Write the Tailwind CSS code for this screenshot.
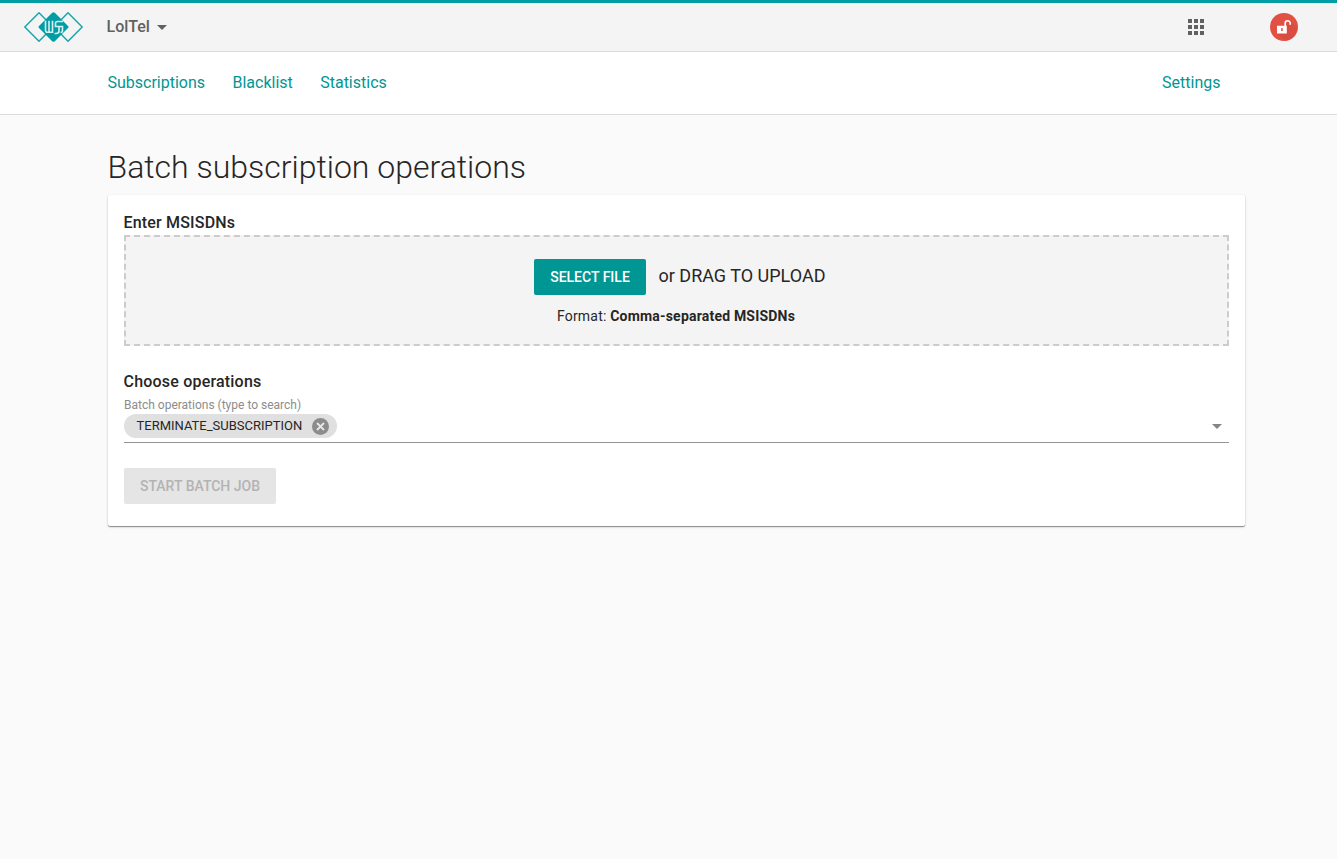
<!DOCTYPE html>
<html lang="en">
<head>
<meta charset="utf-8">
<title>Batch subscription operations</title>
<script src="https://cdn.jsdelivr.net/npm/@tailwindcss/browser@4"></script>
</head>
<body class="min-h-screen bg-[#fafafa] font-['Roboto',sans-serif] text-[#262626] antialiased">
<header class="flex h-[52px] items-center border-t-[3px] border-b border-t-[#009da5] border-b-[#dcdcdc] bg-[#f4f4f4] pl-6 pr-[39px]">
  <svg class="h-[30px] w-[59px]" viewBox="0 0 59 30" fill="none">
    <g stroke="#1aa6ad" stroke-width="1.500" stroke-linejoin="round">
      <path d="M15 .8 29 15 15 29.2.8 15Z"/>
      <path d="M44 .8 58.200 15 44 29.200 30 15Z"/>
    </g>
    <path d="M28.200.8Q29.500-.4 30.800.8L44 13.900Q45 15 44 16.100L30.800 29.200Q29.500 30.400 28.200 29.200L15 16.100Q14 15 15 13.900Z" fill="#009da5"/>
    <path d="M21.500 8.700V18Q21.500 20.300 23.500 20.300H28.500V8.700M25 8.700V20.300M39 9.500H33.500Q31.500 9.500 31.500 11.500V14.500H38.500V18.500Q38.500 20.500 36.500 20.500M35 14.500V19Q35 21.500 32 21.500H30.500" stroke="#d9f0f1" stroke-width="1.600"/>
  </svg>
  <button class="ml-[23.500px] flex items-center text-base font-medium leading-6 text-[#616161]">
    <span>LolTel</span>
    <svg class="ml-[7px] h-[5px] w-[10px]" viewBox="0 0 10 5" fill="#616161"><path d="M0 0h10L5 5Z"/></svg>
  </button>
  <svg class="ml-auto h-4 w-4" viewBox="0 0 16 16" fill="#616161"><path d="M0 0h4v4H0zM6 0h4v4H6zM12 0h4v4h-4zM0 6h4v4H0zM6 6h4v4H6zM12 6h4v4h-4zM0 12h4v4H0zM6 12h4v4H6zM12 12h4v4h-4z"/></svg>
  <svg class="ml-[66px] h-7 w-7" viewBox="0 0 28 28">
    <circle cx="14" cy="14" r="14" fill="#e15042"/>
    <path d="M20.500 9 27.200 14.500A14 14 0 0 1 16 27.800L7 20.500 17 13Z" fill="#d94c3f"/>
    <path d="M15.200 13V10.300a2.500 2.500 0 0 1 5 0V11.800" fill="none" stroke="#fff" stroke-width="1.600"/>
    <path fill="#fff" fill-rule="evenodd" d="M7 12.700h9.800v7.800H7zM11.200 15v3h1.500v-3z"/>
  </svg>
</header>
<nav class="flex h-[63px] items-center gap-[27.400px] border-b border-[#dcdcdc] bg-white pl-[107.500px] pr-[116.500px] text-base text-[#009694]">
  <a>Subscriptions</a>
  <a>Blacklist</a>
  <a>Statistics</a>
  <a class="ml-auto">Settings</a>
</nav>
<main class="ml-[108px] w-[1137px] pt-8">
  <h1 class="-ml-[0.5px] h-12 text-[32px] font-light leading-[40px]">Batch subscription operations</h1>
  <section class="h-[331px] rounded-[2px] bg-white px-4 pt-4 shadow-[0_1px_1px_rgba(0,0,0,0.4),0_1px_3px_rgba(0,0,0,0.12)]">
    <h2 class="-ml-[0.5px] h-6 text-base font-medium leading-6 tracking-[0.18px]">Enter MSISDNs</h2>
    <div class="h-[111px] border-2 border-dashed border-[#cccccc] bg-[#f4f4f4] pt-[22px]">
      <div class="flex items-center justify-center gap-[12.500px] pl-[6.500px]">
        <button class="h-9 w-28 rounded-[2px] bg-[#009694] text-sm font-medium text-white">SELECT FILE</button>
        <span class="-mt-0.5 text-lg leading-6">or DRAG TO UPLOAD</span>
      </div>
      <p class="mt-[11px] -ml-px text-center text-sm leading-5 tracking-[0.2px]">Format: <b>Comma-separated MSISDNs</b></p>
    </div>
    <h2 class="-ml-[0.5px] mt-6 h-6 text-base font-medium leading-6 tracking-[0.2px]">Choose operations</h2>
    <label class="block h-5 pt-[3px] text-xs leading-4 text-[#8c8c8c]">Batch operations (type to search)</label>
    <div class="flex h-[29px] items-start justify-between border-b border-[#949494] pr-[7.500px]">
      <span class="flex h-6 w-[213px] items-center justify-between rounded-full bg-[#e0e0e0] pl-[12.500px] pr-[8.500px] text-[13px]">TERMINATE_SUBSCRIPTION
        <svg class="h-[17px] w-[17px]" viewBox="0 0 17 17"><circle cx="8.500" cy="8.500" r="8.500" fill="#8c8c8c"/><path d="m5 5 7 7m0-7-7 7" stroke="#e8e8e8" stroke-width="1.800"/></svg>
      </span>
      <svg class="mt-[10px] h-[5px] w-[10px]" viewBox="0 0 10 5" fill="#858585"><path d="M0 0h10L5 5Z"/></svg>
    </div>
    <button class="mt-[25px] h-9 w-[152px] rounded-[2px] bg-[#e5e5e5] text-sm font-medium text-[#b3b3b3]">START BATCH JOB</button>
  </section>
</main>
</body>
</html>
